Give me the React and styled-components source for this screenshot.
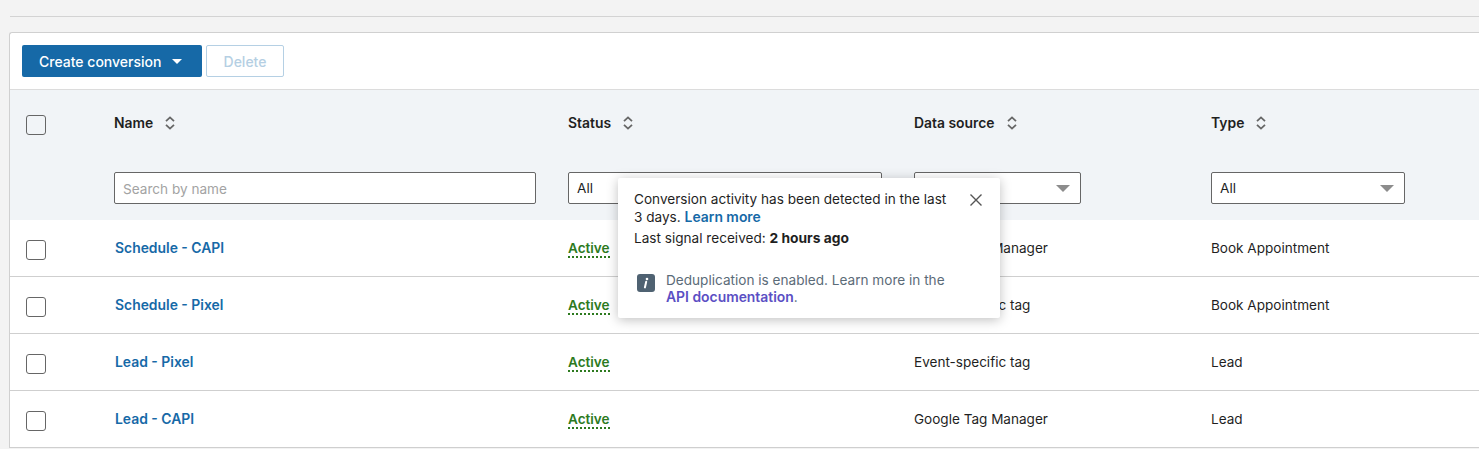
import React from "react";
import styled, { createGlobalStyle } from "styled-components";

const GlobalStyle = createGlobalStyle`
  html, body {
    margin: 0;
    padding: 0;
    height: 449px;
    overflow: hidden;
    background: #f3f3f3;
    font-family: Inter, "Liberation Sans", sans-serif;
    font-size: 13.6px;
    color: #1f1f1f;
  }
`;

const columns = "104px 454px 346px 297px 1fr";

const Page = styled.div`
  position: relative;
  padding: 16px 0 0 10px;
`;

const Divider = styled.hr`
  margin: 0 0 15px;
  border: 0;
  border-top: 1px solid #d3d3d3;
`;

const Card = styled.section`
  margin-left: -1px;
  background: #fff;
  border: 1px solid #d0d0d0;
  border-right: 0;
  border-bottom: 0;
  border-top-left-radius: 3px;
`;

const Toolbar = styled.div`
  display: flex;
  gap: 4px;
  height: 57px;
  padding: 12px 12px 0;
  box-sizing: border-box;
  border-bottom: 1px solid #dcdcdc;
`;

const PrimaryButton = styled.button`
  display: flex;
  align-items: center;
  gap: 11px;
  width: 180px;
  height: 32px;
  padding: 0 0 0 17px;
  border: 0;
  border-radius: 2px;
  background: #1669a7;
  color: #fff;
  font: 500 14px Inter, sans-serif;
`;

const CaretDown = styled.span`
  width: 0;
  height: 0;
  border-left: 5px solid transparent;
  border-right: 5px solid transparent;
  border-top: 5px solid ${(props) => props.color};
`;

const GhostButton = styled.button`
  width: 78px;
  height: 32px;
  padding: 0;
  border: 1px solid #b5d0e4;
  border-radius: 2px;
  background: #fff;
  color: #b5cfe3;
  font: 500 14px Inter, sans-serif;
`;

const HeaderBlock = styled.div`
  height: 130px;
  background: #f1f4f7;
`;

const HeaderRow = styled.div`
  display: grid;
  grid-template-columns: ${columns};
  align-items: center;
  height: 66px;
`;

const FilterRow = styled.div`
  display: grid;
  grid-template-columns: ${columns};
  padding-top: 16px;
`;

const Checkbox = styled.span`
  display: block;
  box-sizing: border-box;
  width: 20px;
  height: 20px;
  margin: 4px 0 0 16px;
  border: 1px solid #666;
  border-radius: 3px;
  background: ${(props) => (props.$clear ? "transparent" : "#fff")};
`;

const ColumnTitle = styled.div`
  display: flex;
  align-items: center;
  gap: 12px;
  font-weight: 600;
  font-size: 13.9px;
  color: #1f1f1f;
`;

const SearchField = styled.input`
  box-sizing: border-box;
  width: 422px;
  height: 32px;
  padding: 2px 8px 0;
  border: 1px solid #666;
  border-radius: 2px;
  background: #fff;
  font: 13.6px Inter, sans-serif;

  &::placeholder {
    color: #a3a3a3;
    opacity: 1;
  }
`;

const SelectBox = styled.div`
  display: flex;
  align-items: center;
  justify-content: space-between;
  box-sizing: border-box;
  width: ${(props) => props.$width}px;
  height: 32px;
  padding: 0 10px 0 8px;
  border: 1px solid #666;
  border-radius: 2px;
  background: #fff;
  font-size: 13.6px;
`;

const SelectCaret = styled.span`
  width: 0;
  height: 0;
  border-left: 7px solid transparent;
  border-right: 7px solid transparent;
  border-top: 7px solid #8c8c8c;
`;

const Row = styled.div`
  display: grid;
  grid-template-columns: ${columns};
  align-items: center;
  box-sizing: border-box;
  height: 57px;
  padding-bottom: 1px;
  border-bottom: 1px solid #cfcfcf;
  font-size: 13.55px;
`;

const NameLink = styled.a`
  padding-left: 1px;
  color: #1669a7;
  font-weight: 600;
  font-size: 13.9px;
`;

const StatusText = styled.span`
  justify-self: start;
  margin-top: 4px;
  color: #2d7a1f;
  font-weight: 600;
  border-bottom: 2px dotted #2d7a1f;
  line-height: 15px;
`;

const Popover = styled.div`
  position: absolute;
  left: 618px;
  top: 178px;
  box-sizing: border-box;
  width: 382px;
  height: 140px;
  padding: 12px 16px;
  background: #fff;
  border-radius: 2px;
  box-shadow: 0 2px 12px rgba(0, 0, 0, 0.25);
  font-size: 13.6px;
  line-height: 18px;
`;

const PopoverText = styled.p`
  margin: 0 0 3px;
  width: 320px;

  strong {
    font-size: 13.8px;
  }
`;

const LearnLink = styled.a`
  color: #1669a7;
  font-weight: 600;
  font-size: 13.9px;
`;

const CloseButton = styled.button`
  position: absolute;
  top: 15px;
  right: 17px;
  display: flex;
  width: 14px;
  height: 14px;
  padding: 0;
  border: 0;
  background: none;
`;

const Notice = styled.div`
  display: flex;
  gap: 11px;
  margin: 25px 0 0 3px;
  line-height: 17px;
  color: #5b6b78;
`;

const NoticeIcon = styled.span`
  flex: none;
  display: flex;
  width: 18px;
  height: 18px;
  margin-top: 2px;
`;

const DocLink = styled.a`
  color: #5b4fc4;
  font-weight: 600;
  font-size: 13.9px;
`;

function SortIcon() {
  return (
    <svg width="10" height="14" viewBox="0 0 10 14" fill="none">
      <path d="M1 5.2 5 1.4 9 5.2" stroke="#666" strokeWidth="1.8" />
      <path d="M1 8.8 5 12.6 9 8.8" stroke="#666" strokeWidth="1.8" />
    </svg>
  );
}

const rows = [
  { name: "Schedule - CAPI", source: "Google Tag Manager", type: "Book Appointment" },
  { name: "Schedule - Pixel", source: "Event-specific tag", type: "Book Appointment" },
  { name: "Lead - Pixel", source: "Event-specific tag", type: "Lead" },
  { name: "Lead - CAPI", source: "Google Tag Manager", type: "Lead" },
];

const titles = ["Name", "Status", "Data source", "Type"];

export default function App() {
  return (
    <Page>
      <GlobalStyle />
      <Divider />
      <Card>
        <Toolbar>
          <PrimaryButton>
            Create conversion
            <CaretDown color="#fff" />
          </PrimaryButton>
          <GhostButton>Delete</GhostButton>
        </Toolbar>
        <HeaderBlock>
          <HeaderRow>
            <Checkbox $clear />
            {titles.map((title) => (
              <ColumnTitle key={title}>
                {title}
                <SortIcon />
              </ColumnTitle>
            ))}
          </HeaderRow>
          <FilterRow>
            <span />
            <SearchField placeholder="Search by name" />
            <SelectBox $width={314}>
              All
              <SelectCaret />
            </SelectBox>
            <SelectBox $width={167}>
              All
              <SelectCaret />
            </SelectBox>
            <SelectBox $width={194}>
              All
              <SelectCaret />
            </SelectBox>
          </FilterRow>
        </HeaderBlock>
        {rows.map((row) => (
          <Row key={row.name}>
            <Checkbox />
            <NameLink>{row.name}</NameLink>
            <StatusText>Active</StatusText>
            <span>{row.source}</span>
            <span>{row.type}</span>
          </Row>
        ))}
      </Card>
      <Popover>
        <PopoverText>
          Conversion activity has been detected in the last 3 days. <LearnLink>Learn more</LearnLink>
        </PopoverText>
        <PopoverText>
          Last signal received: <strong>2 hours ago</strong>
        </PopoverText>
        <CloseButton>
          <svg width="14" height="14" viewBox="0 0 14 14" fill="none">
            <path d="M1.5 1.5 12.5 12.5M12.5 1.5 1.5 12.5" stroke="#555" strokeWidth="1.4" />
          </svg>
        </CloseButton>
        <Notice>
          <NoticeIcon>
            <svg width="18" height="18" viewBox="0 0 18 18">
              <rect width="18" height="18" rx="3" fill="#4f6272" />
              <circle cx="10" cy="5" r="1.3" fill="#fff" />
              <path d="M9.2 7.8 7.9 13.4" stroke="#fff" strokeWidth="2" strokeLinecap="round" />
            </svg>
          </NoticeIcon>
          <div>
            Deduplication is enabled. Learn more in the
            <br />
            <DocLink>API documentation</DocLink>.
          </div>
        </Notice>
      </Popover>
    </Page>
  );
}
